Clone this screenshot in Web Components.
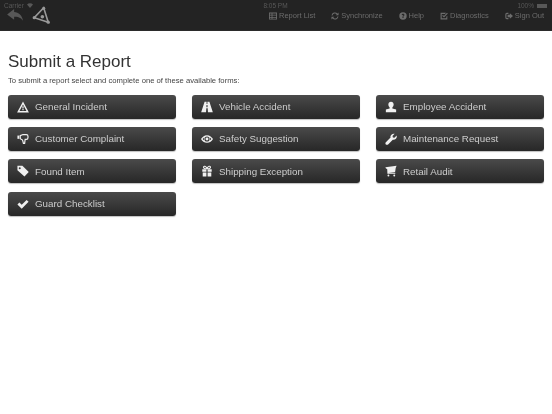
<!DOCTYPE html>
<html>
<head>
<meta charset="utf-8">
<title>Submit a Report</title>
<style>
	html, body { margin: 0; padding: 0; background: #fff; }
	body { width: 552px; height: 414px; overflow: hidden; font-family: "Liberation Sans", Arial, sans-serif; }
</style>
</head>
<body>
<app-shell>
	<top-bar>
		<nav-item label="Report List" icon="list"></nav-item>
		<nav-item label="Synchronize" icon="sync"></nav-item>
		<nav-item label="Help" icon="help"></nav-item>
		<nav-item label="Diagnostics" icon="diag"></nav-item>
		<nav-item label="Sign Out" icon="signout"></nav-item>
	</top-bar>
	<report-page heading="Submit a Report" intro="To submit a report select and complete one of these available forms:">
		<form-button label="General Incident" icon="warning"></form-button>
		<form-button label="Vehicle Accident" icon="road"></form-button>
		<form-button label="Employee Accident" icon="user"></form-button>
		<form-button label="Customer Complaint" icon="thumb"></form-button>
		<form-button label="Safety Suggestion" icon="eye"></form-button>
		<form-button label="Maintenance Request" icon="wrench"></form-button>
		<form-button label="Found Item" icon="tag"></form-button>
		<form-button label="Shipping Exception" icon="gift"></form-button>
		<form-button label="Retail Audit" icon="cart"></form-button>
		<form-button label="Guard Checklist" icon="check"></form-button>
	</report-page>
</app-shell>
<script>
	// 14x14 glyphs, all painted in currentColor
	const ICONS = {
		list: '<path fill-rule="evenodd" d="M0 1h14v12H0zM1.500 2.500v2.500h3V2.500zm4.500 0v2.500h6.500V2.500zM1.500 6.300v2.500h3V6.300zm4.500 0v2.500h6.500V6.300zM1.500 10v1.700h3V10zm4.500 0v1.700h6.500V10z"/>',
		sync: '<path fill="none" stroke="currentColor" stroke-width="1.800" d="M1.800 6.200A5.300 5.300 0 0 1 10.800 3.200M12.200 7.800A5.300 5.300 0 0 1 3.200 10.800"/><path d="M13.200 .8v5H8.200zM.8 13.200v-5h5z"/>',
		help: '<path fill-rule="evenodd" d="M7 .5a6.500 6.500 0 1 1 0 13A6.500 6.500 0 0 1 7 .5zM4.700 5.400l1.700.4c.1-.5.3-.8.7-.8.3 0 .6.200.6.500 0 .7-1.600.9-1.600 2.600h1.700c0-1 1.700-1.200 1.700-2.800C9.500 4 8.400 3.200 7 3.200c-1.300 0-2.100.9-2.300 2.200zM6.100 8.700v1.800h1.800V8.700z"/>',
		diag: '<path d="M1 1.500H10.500L8.800 3.300H3v7.700h8V8.200L12.800 6.400V13H1z"/><path fill="none" stroke="currentColor" stroke-width="2" d="M4.500 5.800 7 8.300 13 2"/>',
		signout: '<path d="M6 1.500H3.200A2.700 2.700 0 0 0 .5 4.200v5.600a2.700 2.700 0 0 0 2.700 2.700H6V10.500H3.500a1 1 0 0 1-1-1v-5a1 1 0 0 1 1-1H6z"/><path d="M8.500 2 14 7l-5.500 5V9H4.500V5H8.500z"/>',
		warning: '<path fill-rule="evenodd" d="M7 .5 13.900 13.500H.1zM7 4 2.900 11.700H11.100z"/><path d="M6.300 6h1.400v2.800H6.300zM6.300 9.400h1.400v1.300H6.300z"/>',
		road: '<path fill-rule="evenodd" d="M4.200 1h2.300v2.500h1V1h2.300L13.800 13H8.100L7.800 8.500H6.200L5.900 13H.2zM6.400 4.600 6.300 7.300H7.700L7.600 4.600z"/>',
		user: '<path d="M7 1c1.900 0 3.100 1.300 3.100 3.200 0 1.400-.7 2.600-1.500 3.300v1.200l4.400 1.300V13H1V10l4.400-1.300V7.500C4.600 6.800 3.900 5.600 3.900 4.200 3.900 2.300 5.100 1 7 1z"/>',
		thumb: '<path d="M.5 3h2.200v3.800H.5z"/><path fill="none" stroke="currentColor" stroke-width="1.400" d="M3.800 3 7 1.800h3.900c1.100 0 1.900.9 1.900 1.900v1.800c0 1.100-.8 1.900-1.900 1.900H9.500L8.900 12H7.500L6.500 8.200 3.800 6.600z"/>',
		eye: '<path fill-rule="evenodd" d="M7 2.500c3.200 0 5.700 2.300 7 4.500-1.300 2.200-3.800 4.500-7 4.500S1.300 9.200 0 7C1.300 4.800 3.800 2.500 7 2.500zM7 4a3 3 0 1 0 0 6 3 3 0 0 0 0-6zM1.900 7c.5.700 1.100 1.300 1.900 1.800a4 4 0 0 1 0-3.600C3 5.700 2.400 6.300 1.900 7zM10.200 5.200a4 4 0 0 1 0 3.600c.8-.5 1.400-1.100 1.900-1.800-.5-.7-1.100-1.300-1.900-1.800z"/><circle cx="7" cy="7" r="1.700"/>',
		wrench: '<path d="M13.600 3c.4 1.600 0 3.100-1.200 4.100-1 .8-2.200 1-3.300.7L3.600 13.300c-.7.700-1.900.7-2.600 0-.7-.8-.7-1.900 0-2.600L6.500 5.300C6.100 4.200 6.400 2.900 7.500 1.900 8.500 1 9.900.7 11.200 1L8.800 3.400l.4 1.800 1.800.4z"/>',
		tag: '<path fill-rule="evenodd" d="M.5 1h5.800l7.400 7.300-5 5L.5 6zM3.200 2.600a1.100 1.100 0 1 0 0 2.300A1.100 1.100 0 0 0 3.200 2.600z"/>',
		gift: '<path d="M1.500 5h4.800v2.800H1.500zM7.700 5h4.800v2.800H7.700zM2 8.800h4.300V13.500H2zM7.700 8.800H12V13.500H7.700z"/><path fill="none" stroke="currentColor" stroke-width="1.300" d="M7 4.300C6 1 3 .8 2.900 2.600 2.800 4 5 4.300 7 4.300zM7 4.300C8 1 11 .8 11.100 2.600 11.200 4 9 4.300 7 4.300z"/>',
		cart: '<path d="M.5 2.500 13.500 1 12.500 3.500 11.800 8.200 4 9H12v1.300H2.800L2.600 5 .9 3.900z"/><circle cx="4" cy="12.300" r="1.100"/><circle cx="10.800" cy="12.300" r="1.100"/>',
		check: '<path d="M.5 7.500 2.800 5.200 5.500 7.900 11.200 2.200 13.500 4.500 5.500 12.500z"/>'
	}

	function iconSvg(name, size) {
		return `<svg width="${size}" height="${size}" viewBox="0 0 14 14" fill="currentColor" aria-hidden="true">${ICONS[name]}</svg>`
	}

	class AppShell extends HTMLElement {
		constructor() {
			super()
			this.attachShadow({ mode: 'open' })
			// the screenshot is a scaled down capture, so everything is a little soft
			this.shadowRoot.innerHTML = `
				<style>
					:host { display: flex; flex-direction: column; width: 552px; height: 414px; filter: blur(.35px); background: #fff; }
				</style>
				<slot></slot>
			`
		}
	}

	class TopBar extends HTMLElement {
		constructor() {
			super()
			this.attachShadow({ mode: 'open' })
			this.shadowRoot.innerHTML = `
				<style>
					:host {
						display: block;
						height: 31px;
						flex: none;
						background: #232323;
						color: #6c6c6c;
						box-shadow: inset 0 -1px 0 #2b2b2b;
					}
					.status {
						display: grid;
						grid-template-columns: 1fr auto 1fr;
						align-items: center;
						height: 10px;
						padding: 1px 5px 0 4px;
						box-sizing: border-box;
						font-size: 6.500px;
						color: #585858;
					}
					.status .right { display: flex; justify-content: flex-end; align-items: center; gap: 3px; }
					.status .carrier { display: flex; align-items: center; gap: 3px; }
					.battery { display: block; width: 10px; height: 4px; background: #585858; }
					.main { display: flex; align-items: flex-start; justify-content: space-between; height: 21px; padding-right: 8px; }
					.brand { display: flex; align-items: flex-start; gap: 7px; padding-left: 5px; margin-top: -4px; color: #585858; }
					.brand .logo { color: #999; }
					.brand svg { display: block; }
					.back { margin-top: 2px; }
					nav { display: flex; gap: 16px; margin-top: 1px; }
				</style>
				<div class="status">
					<span class="carrier">Carrier
						<svg width="6" height="5" viewBox="0 0 6 5" fill="currentColor"><path d="M0 1.500a4.200 4.200 0 0 1 6 0L3 5z"/></svg>
					</span>
					<span>8:05 PM</span>
					<span class="right">100% <i class="battery"></i></span>
				</div>
				<div class="main">
					<div class="brand">
						<svg class="back" width="20" height="14" viewBox="0 0 20 16" fill="currentColor"><path d="M9 1 1 7.500 9 13.500V10c4 0 7.500.5 10 4.500C18.500 8.500 14 4.500 9 4.500z"/></svg>
						<svg class="logo" width="18" height="18" viewBox="0 0 20 20"><path fill="none" stroke="currentColor" stroke-width="1.800" d="M13 2 2.500 13 18 18z"/><g fill="currentColor"><circle cx="13" cy="2.500" r="1.700"/><circle cx="2.500" cy="13" r="1.800"/><circle cx="18" cy="18" r="1.800"/><circle cx="11.500" cy="12" r="2"/></g></svg>
					</div>
					<nav><slot></slot></nav>
				</div>
			`
		}
	}

	class NavItem extends HTMLElement {
		constructor() {
			super()
			this.attachShadow({ mode: 'open' })
			this.shadowRoot.innerHTML = `
				<style>
					:host { display: inline-flex; align-items: center; gap: 2px; font-size: 7.500px; line-height: 10px; white-space: nowrap; }
					svg { display: block; }
				</style>
				${iconSvg(this.getAttribute('icon'), 8)}
				<span>${this.getAttribute('label')}</span>
			`
		}
	}

	class ReportPage extends HTMLElement {
		constructor() {
			super()
			this.attachShadow({ mode: 'open' })
			this.shadowRoot.innerHTML = `
				<style>
					:host { display: block; padding: 21px 8px 0; color: #333; }
					h1 { margin: 0; font-size: 17px; line-height: 20px; font-weight: 400; color: #333; }
					p { margin: 4px 0 0; font-size: 7.660px; line-height: 10px; color: #444; }
					.forms {
						display: grid;
						grid-template-columns: repeat(3, 168px);
						column-gap: 16px;
						row-gap: 8.400px;
						margin-top: 8.500px;
					}
				</style>
				<h1>${this.getAttribute('heading')}</h1>
				<p>${this.getAttribute('intro')}</p>
				<div class="forms"><slot></slot></div>
			`
		}
	}

	class FormButton extends HTMLElement {
		constructor() {
			super()
			this.attachShadow({ mode: 'open' })
			this.shadowRoot.innerHTML = `
				<style>
					:host {
						display: flex;
						align-items: center;
						height: 24px;
						box-sizing: border-box;
						padding-left: 9px;
						border-radius: 3px;
						background: linear-gradient(#4a4a4a, #272727);
						box-shadow: 0 1px 1px rgba(0, 0, 0, .25);
						color: #cdcdcd;
						font-size: 9.800px;
					}
					.icon { width: 18px; flex: none; color: #f0f0f0; }
					svg { display: block; }
					span { white-space: nowrap; }
				</style>
				<div class="icon">${iconSvg(this.getAttribute('icon'), 12)}</div>
				<span>${this.getAttribute('label')}</span>
			`
		}
	}

	customElements.define('app-shell', AppShell)
	customElements.define('top-bar', TopBar)
	customElements.define('nav-item', NavItem)
	customElements.define('report-page', ReportPage)
	customElements.define('form-button', FormButton)
</script>
</body>
</html>
